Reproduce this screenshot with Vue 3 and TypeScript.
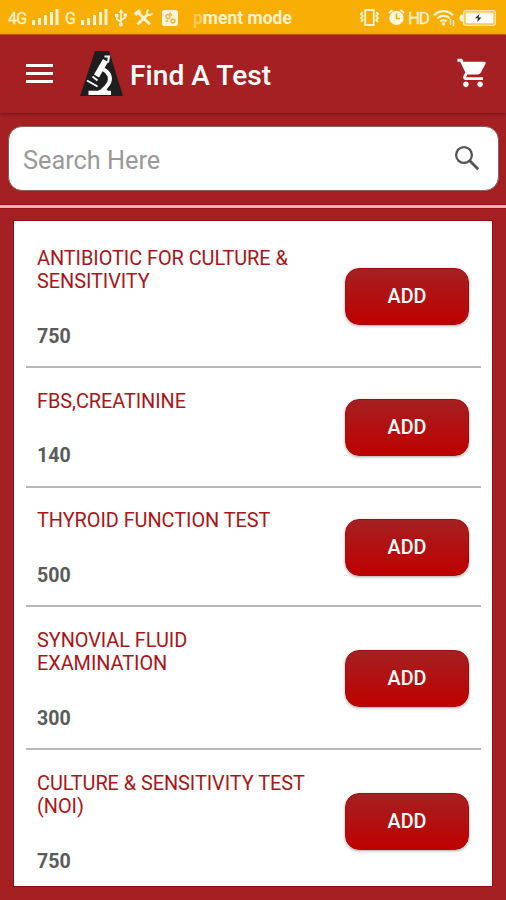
<script setup lang="ts">
interface LabTest {
  lines: string[]
  price: number
}

const tests: LabTest[] = [
  { lines: ['ANTIBIOTIC FOR CULTURE &', 'SENSITIVITY'], price: 750 },
  { lines: ['FBS,CREATININE'], price: 140 },
  { lines: ['THYROID FUNCTION TEST'], price: 500 },
  { lines: ['SYNOVIAL FLUID', 'EXAMINATION'], price: 300 },
  { lines: ['CULTURE & SENSITIVITY TEST', '(NOI)'], price: 750 },
]
</script>

<template>
  <div class="screen">
    <div class="status">
      <span class="net net-4g">4G</span>
      <svg class="bars" width="27" height="17" viewBox="0 0 27 17" fill="#fff3d2">
        <path d="M0 11h3v5H0zM6 9h3v7H6zM12 6h3v10h-3zM18 3h3v13h-3zM23.500 0h3v16h-3z" />
      </svg>
      <span class="net net-g">G</span>
      <svg class="bars" width="27" height="17" viewBox="0 0 27 17" fill="#fff3d2">
        <path d="M0 11h3v5H0zM6 9h3v7H6zM12 6h3v10h-3zM18 3h3v13h-3zM23.500 0h3v16h-3z" />
      </svg>
      <svg class="usb" width="12" height="18" viewBox="0 0 12 18" fill="none" stroke="#fff3d2" stroke-width="1.700">
        <path d="M6 3v12M6 13L1.800 10V6.500M6 11l4.200-2.500V5.500" />
        <path d="M6 0l2.600 4H3.400z" fill="#fff3d2" stroke="none" />
        <circle cx="6" cy="15.500" r="2" fill="#fff3d2" stroke="none" />
        <path d="M0 5h3.500v3H0zM8.500 4.500H12v3H8.500z" fill="#fff3d2" stroke="none" />
      </svg>
      <svg class="tools" width="19" height="17" viewBox="0 0 19 17" fill="none" stroke="#fff3d2" stroke-width="2.900">
        <path d="M3.500 15.500L14 5M5 4.500L16 15.500" />
        <path d="M1 5.500l5-4" stroke-width="3.600" />
        <path d="M14.500.8c-2 1.200-2.200 3.600-.6 4.700 1.500 1 3.500.5 4.300-1.300" stroke-width="2" />
      </svg>
      <svg class="app" width="16" height="16" viewBox="0 0 16 16">
        <rect width="16" height="16" rx="2.500" fill="#fff6df" />
        <g fill="none" stroke="#f6b32a" stroke-width="1.300">
          <circle cx="6" cy="6.500" r="2" />
          <circle cx="11" cy="11" r="2" />
          <path d="M7.500 2.500l2.500 3M4 12l2-2" />
        </g>
      </svg>
      <span class="ticker"><span class="faded">p</span>ment mode</span>
      <svg class="vibrate" width="21" height="17" viewBox="0 0 21 17" fill="none" stroke="#fff3d2" stroke-width="1.900">
        <rect x="6.200" y="1" width="8.600" height="15" />
        <path d="M3.700 3L2 5l1.700 2L2 9l1.700 2L2 13M17.300 3L19 5l-1.700 2L19 9l-1.700 2 1.700 2" />
      </svg>
      <svg class="alarm" width="17" height="17" viewBox="0 0 17 17">
        <circle cx="8.500" cy="9" r="7.200" fill="#fff6df" />
        <path d="M1 4l3.500-3M16 4l-3.500-3" stroke="#fff6df" stroke-width="2" />
        <path d="M8.500 4.500v5h3.500" fill="none" stroke="#f9ae03" stroke-width="1.600" />
      </svg>
      <span class="net hd">HD</span>
      <svg class="wifi" width="22" height="17" viewBox="0 0 22 17" fill="none" stroke="#fff3d2" stroke-width="2.200">
        <path d="M1 6.200c5.500-5.500 13.500-5.500 19 0M4.200 9.500c3.700-3.500 9-3.500 12.600 0M7.300 12.500c2-1.800 4.400-1.800 6.400 0" />
        <circle cx="10.500" cy="15" r="1.800" fill="#fff3d2" stroke="none" />
        <path d="M17.500 10v6M20.500 11v6" stroke-width="1.500" />
      </svg>
      <svg class="battery" width="37" height="16" viewBox="0 0 37 16">
        <path d="M4 4.500H2.500Q.5 4.500 .5 8t2 3.500H4z" fill="#fff3d2" />
        <rect x="4.700" y=".8" width="31.500" height="14.400" rx="2" fill="none" stroke="#ffe7ae" stroke-width="1.500" />
        <rect x="6.500" y="2.500" width="28" height="11" fill="#fffdf8" />
        <path d="M20.500 4l-4.500 4.300h3L18 12l4.500-4.500h-3z" fill="#292723" />
      </svg>
    </div>

    <header class="appbar">
      <svg class="menu" width="27" height="21" viewBox="0 0 27 21" fill="#fff">
        <path d="M0 1h27v3H0zM0 9h27v3H0zM0 17h27v3H0z" />
      </svg>
      <svg class="logo" width="43" height="45" viewBox="0 0 43 45">
        <path d="M15 0h14l14 45H0z" fill="#1d1e1d" />
        <g fill="none" stroke="#fff">
          <path d="M25.500 9.500L16.500 25" stroke-width="5.800" />
          <path d="M24.500 5.500h4.500l-1 6" stroke-width="2" />
          <path d="M12.500 25.500l5 4" stroke-width="2" />
          <path d="M23.500 18.500c6.500 3 8 9.500 4.800 14.500-1.500 2.500-3.500 4.500-6 6.500" stroke-width="4" />
          <path d="M7 29.500l10.500 6" stroke-width="2" />
        </g>
        <path d="M8.500 44v-4.200H18l3-1.500h5.500l1.500 1.500h3V44z" fill="#fff" />
      </svg>
      <h1>Find A Test</h1>
      <svg class="cart" width="34" height="34" viewBox="0 0 24 24" fill="#fff">
        <path d="M7 18c-1.100 0-1.990.9-1.990 2S5.900 22 7 22s2-.9 2-2-.9-2-2-2zM1 2v2h2l3.600 7.590-1.350 2.450c-.16.280-.25.610-.25.960 0 1.100.9 2 2 2h12v-2H7.420c-.14 0-.25-.11-.25-.25l.03-.12.900-1.630h7.450c.75 0 1.410-.41 1.750-1.030l3.580-6.490c.08-.14.120-.31.120-.48 0-.55-.45-1-1-1H5.210l-.94-2H1zm16 16c-1.100 0-1.990.9-1.990 2s.89 2 1.990 2 2-.9 2-2-.9-2-2-2z" />
      </svg>
    </header>

    <div class="search">
      <span>Search Here</span>
      <svg width="26" height="26" viewBox="0 0 26 26" fill="none" stroke="#555" stroke-width="2.300">
        <circle cx="10" cy="10" r="7.900" />
        <path d="M15.800 15.800l8.400 8.400" stroke-width="2.900" />
      </svg>
    </div>

    <div class="rule"></div>

    <main class="list">
      <article v-for="test in tests" :key="test.lines[0]" class="row">
        <div class="info">
          <h2><span v-for="line in test.lines" :key="line">{{ line }}</span></h2>
          <p>{{ test.price }}</p>
        </div>
        <button type="button">ADD</button>
      </article>
    </main>
  </div>
</template>

<style>
body {
  margin: 0;
}
</style>

<style scoped>
.screen {
  box-sizing: border-box;
  width: 506px;
  height: 900px;
  overflow: hidden;
  background: #a52022;
  font-family: Roboto, sans-serif;
}

.status {
  box-sizing: border-box;
  display: flex;
  align-items: center;
  height: 35px;
  padding: 1px 10px 0 8px;
  background: #f9ae03;
  border-bottom: 1px solid #c96510;
  color: #fff3d2;
}
.status svg {
  flex: none;
}
.net {
  flex: none;
  font-size: 16px;
  line-height: 20px;
  padding-top: 3px;
  -webkit-text-stroke: 0.3px #fff3d2;
}
.net-4g {
  width: 24px;
  letter-spacing: -0.800px;
}
.net-g {
  width: 16px;
  margin-left: 6px;
}
.usb {
  margin-left: 7px;
}
.tools {
  margin-left: 7px;
}
.app {
  margin-left: 9px;
}
.ticker {
  flex: none;
  width: 100px;
  margin: 1px 0 0 15px;
  font-size: 17.500px;
  font-weight: 700;
  line-height: 22px;
  white-space: nowrap;
}
.faded {
  opacity: 0.4;
}
.vibrate {
  margin-left: auto;
}
.alarm {
  margin-left: 8px;
}
.hd {
  width: 22px;
  margin-left: 3px;
  padding-top: 0;
  font-size: 17px;
  letter-spacing: -1.500px;
}
.wifi {
  margin-left: 3px;
}
.battery {
  margin-left: 4px;
}

.appbar {
  box-sizing: border-box;
  display: flex;
  align-items: center;
  height: 78px;
  padding: 0 16px 0 26px;
  box-shadow: 0 1px 3px rgba(70, 20, 10, 0.7);
  color: #fff;
}
.menu {
  margin-top: -1px;
}
.logo {
  margin: -1px 0 0 27px;
}
h1 {
  margin: 4px 0 0 7px;
  font-size: 28.200px;
  font-weight: 500;
  line-height: 34px;
}
.cart {
  margin: 0 0 2px auto;
}

.search {
  box-sizing: border-box;
  display: flex;
  align-items: center;
  justify-content: space-between;
  height: 65px;
  margin: 13px 7px 0 8px;
  padding: 3px 18px 0 14px;
  border: 1px solid #87615f;
  border-radius: 14px;
  background: #fff;
  color: #999;
  font-size: 25.300px;
}
.search svg {
  margin-top: -4px;
}

.rule {
  height: 3px;
  margin-top: 14px;
  background: #e5b5b5;
  box-shadow: 0 0 0 1px #981014;
}

.list {
  box-sizing: border-box;
  height: 665px;
  margin: 13px 14px 0;
  padding: 4px 11px 0 12px;
  overflow: hidden;
  background: #fff;
  box-shadow: 0 0 0 1px #950c10;
}
.row {
  display: flex;
  align-items: center;
  justify-content: space-between;
  padding: 21.500px 12px 17.400px 11px;
  border-bottom: 2px solid #b8b8b8;
}
.row:last-child {
  border-bottom: 0;
}
h2 {
  margin: 0;
  color: #a91519;
  font-size: 19.900px;
  font-weight: 400;
  letter-spacing: -0.050px;
  line-height: 23.600px;
}
h2 span {
  display: block;
  white-space: nowrap;
}
p {
  margin: 31px 0 0;
  color: #5b5b5b;
  font-size: 19.600px;
  font-weight: 700;
  line-height: 24px;
}
button {
  width: 124px;
  height: 57px;
  margin-top: -2px;
  padding: 1px 0 0;
  border: 1px solid #a30d10;
  border-radius: 14px;
  background: linear-gradient(#a52022, #bf0000);
  box-shadow: 0 1px 3px rgba(0, 0, 0, 0.35);
  color: #fff;
  font: 500 19.800px/24px Roboto, sans-serif;
}
</style>
